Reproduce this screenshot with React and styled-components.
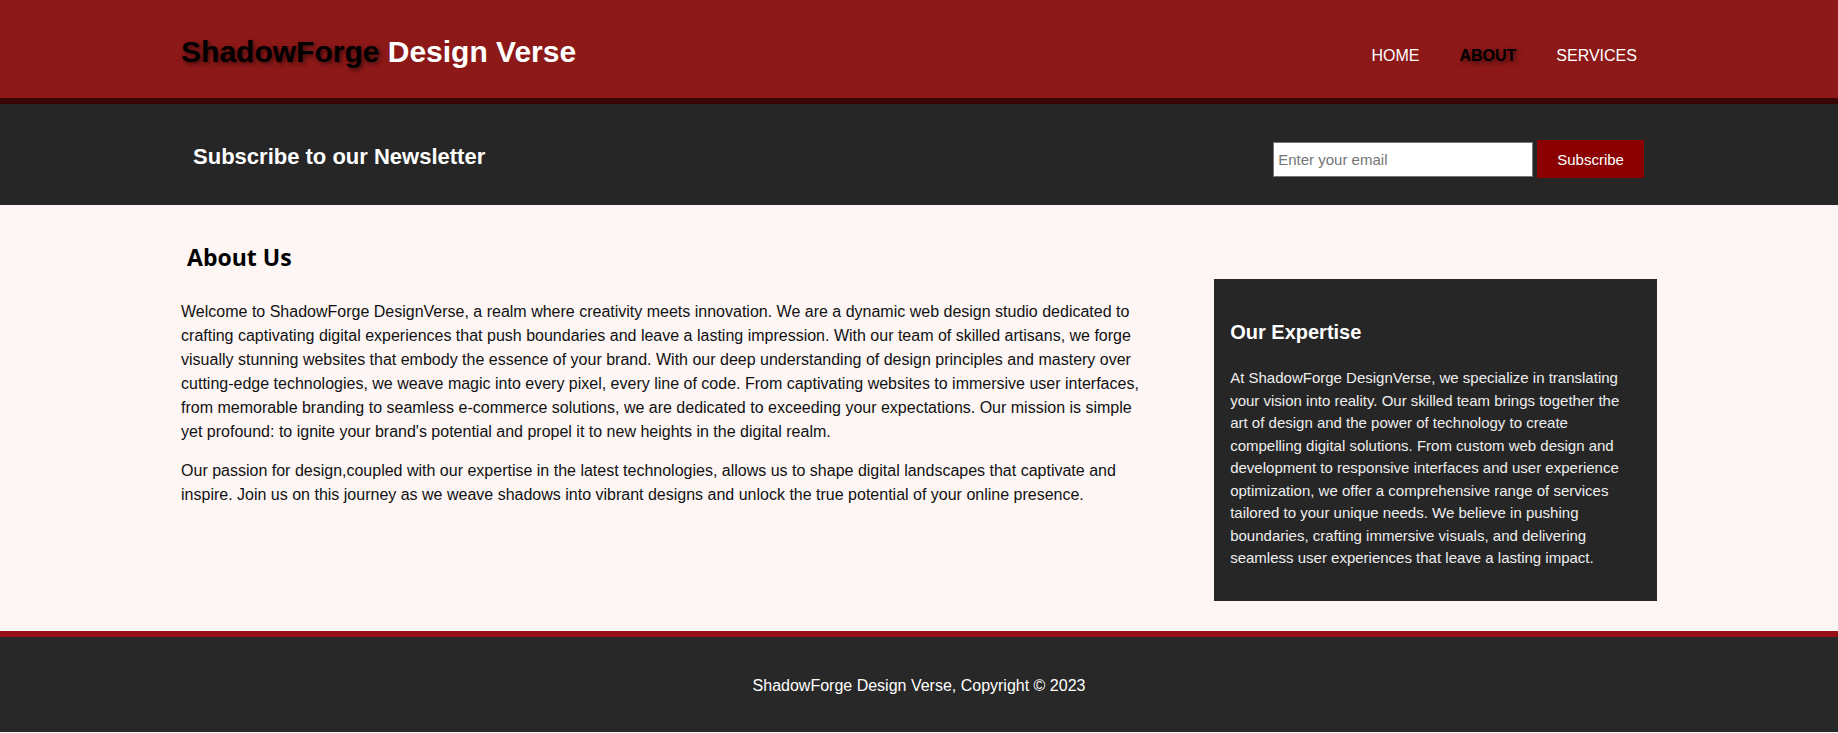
import React from "react";
import styled, { createGlobalStyle } from "styled-components";

const GlobalStyle = createGlobalStyle`
  body {
    margin: 0;
    font-family: "Liberation Sans", Arial, sans-serif;
    font-size: 16px;
    line-height: 1.5;
    background-color: #fdf6f5;
    color: #111;
  }
`;

const navItems = [
  { label: "Home" },
  { label: "About", current: true },
  { label: "Services" },
];

function App() {
  return (
    <>
      <GlobalStyle />
      <Header>
        <Container className="bar">
          <Branding>
            <span className="highlight">ShadowForge</span> Design Verse
          </Branding>
          <Nav>
            {navItems.map((item) => (
              <NavItem key={item.label} $current={item.current}>
                <a href="#">{item.label}</a>
              </NavItem>
            ))}
          </Nav>
        </Container>
      </Header>

      <Newsletter>
        <Container className="bar">
          <h1>Subscribe to our Newsletter</h1>
          <form onSubmit={(e) => e.preventDefault()}>
            <input type="email" placeholder="Enter your email" />
            <SubscribeButton type="submit">Subscribe</SubscribeButton>
          </form>
        </Container>
      </Newsletter>

      <Main>
        <Container className="bar">
          <MainCol>
            <h1>About Us</h1>
            <p>
              Welcome to ShadowForge DesignVerse, a realm where creativity meets
              innovation. We are a dynamic web design studio dedicated to
              crafting captivating digital experiences that push boundaries and
              leave a lasting impression. With our team of skilled artisans, we
              forge visually stunning websites that embody the essence of your
              brand. With our deep understanding of design principles and
              mastery over cutting-edge technologies, we weave magic into every
              pixel, every line of code. From captivating websites to immersive
              user interfaces, from memorable branding to seamless e-commerce
              solutions, we are dedicated to exceeding your expectations. Our
              mission is simple yet profound: to ignite your brand's potential
              and propel it to new heights in the digital realm.
            </p>
            <p>
              Our passion for design,coupled with our expertise in the latest
              technologies, allows us to shape digital landscapes that captivate
              and inspire. Join us on this journey as we weave shadows into
              vibrant designs and unlock the true potential of your online
              presence.
            </p>
          </MainCol>
          <Sidebar>
            <h3>Our Expertise</h3>
            <p>
              At ShadowForge DesignVerse, we specialize in translating your
              vision into reality. Our skilled team brings together the art of
              design and the power of technology to create compelling digital
              solutions. From custom web design and development to responsive
              interfaces and user experience optimization, we offer a
              comprehensive range of services tailored to your unique needs. We
              believe in pushing boundaries, crafting immersive visuals, and
              delivering seamless user experiences that leave a lasting impact.
            </p>
          </Sidebar>
        </Container>
      </Main>

      <Footer>
        <p>ShadowForge Design Verse, Copyright &copy; 2023</p>
      </Footer>
    </>
  );
}

export default App;

const Container = styled.div`
  width: 80.3%;
  margin: 0 auto;

  &.bar {
    display: flex;
    justify-content: space-between;
    align-items: flex-start;
  }
`;

const Header = styled.header`
  background-color: #8c1818;
  color: #fff;
  padding-top: 30px;
  min-height: 68px;
  border-bottom: 6px solid #3a0505;
`;

const Branding = styled.h1`
  margin: 1px 0 0;
  font-size: 30px;
  line-height: 42px;
  font-weight: bold;

  .highlight {
    color: #000;
    text-shadow: 2px 2px 4px rgba(0, 0, 0, 0.55);
  }
`;

const Nav = styled.ul`
  display: flex;
  list-style: none;
  margin: 14px 0 0;
  padding: 0;
`;

const NavItem = styled.li`
  padding: 0 20px;

  a {
    color: ${(p) => (p.$current ? "#000" : "#fff")};
    font-weight: ${(p) => (p.$current ? "bold" : "normal")};
    text-shadow: ${(p) =>
      p.$current ? "2px 2px 4px rgba(0, 0, 0, 0.55)" : "none"};
    text-decoration: none;
    text-transform: uppercase;
    font-size: 16px;
  }
`;

const Newsletter = styled.section`
  background-color: #262626;
  color: #fff;
  padding: 15px 0;
  min-height: 71px;

  h1 {
    margin: 23px 0 0 12px;
    font-size: 22px;
    line-height: 30px;
  }

  form {
    display: flex;
    align-items: center;
    gap: 4px;
    margin: 21px 13px 0 0;
  }

  input {
    width: 250px;
    height: 25px;
    padding: 4px;
    border: 1px solid #767676;
    font-family: "Liberation Sans", Arial, sans-serif;
    font-size: 15px;
    color: #222;
  }

  input::placeholder {
    color: #757575;
  }
`;

const SubscribeButton = styled.button`
  height: 38px;
  padding: 0 20px;
  border: 0;
  background-color: #8b0000;
  color: #fff;
  font-family: "Liberation Sans", Arial, sans-serif;
  font-size: 15px;
`;

const Main = styled.section`
  padding: 34px 0 30px;
`;

const MainCol = styled.article`
  width: 65%;

  h1 {
    margin: 0 0 25px 6px;
    font-family: "Open Sans", "Noto Sans", sans-serif;
    font-size: 23px;
    line-height: 36px;
    font-weight: 700;
    color: #000;
  }

  p {
    margin: 0 0 15px;
    font-size: 16px;
    line-height: 24px;
  }
`;

const Sidebar = styled.aside`
  width: 30%;
  margin-top: 40px;
  background-color: #262626;
  color: #eee;
  padding: 0 19px 16px 16px;
  box-sizing: border-box;
  overflow: hidden;

  h3 {
    margin: 38px 0 20px;
    font-size: 20px;
    line-height: 30px;
    color: #fff;
  }

  p {
    margin: 0 0 15px;
    font-size: 15px;
    line-height: 22.5px;
  }
`;

const Footer = styled.footer`
  background-color: #282828;
  border-top: 6px solid #951019;
  color: #fff;
  text-align: center;
  padding: 37px 0 34px;

  p {
    margin: 0;
    font-size: 16px;
    line-height: 24px;
  }
`;
